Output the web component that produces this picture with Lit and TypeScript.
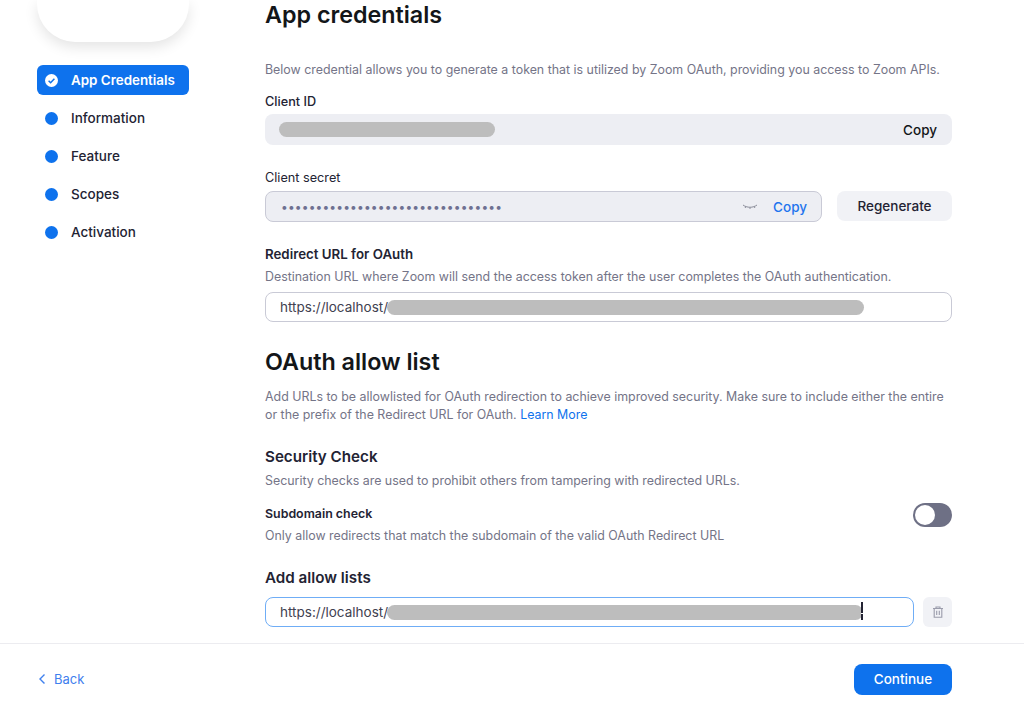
import { LitElement, html, css } from "lit";
import { customElement } from "lit/decorators.js";

@customElement("app-root")
export class AppRoot extends LitElement {
  static styles = css`
    :host { display: block; width: 1024px; height: 708px; overflow: hidden; background: #fff; font-family: Inter, "Liberation Sans", sans-serif; color: #131619; }
    * { box-sizing: border-box; }
    .top { display: flex; height: 643px; overflow: hidden; }
    .side { width: 265px; flex: none; padding-left: 37px; }
    .logo { width: 152px; height: 42px; background: #fff; border-radius: 0 0 38px 38px; box-shadow: 0 5px 14px rgba(0,0,0,.11); margin-bottom: 23px; }
    .nav { display: flex; flex-direction: column; gap: 8px; width: 152px; }
    .item { height: 30px; border-radius: 6px; display: flex; align-items: center; padding-left: 8px; gap: 13px; font-size: 13.5px; font-weight: 500; color: #232333; }
    .item.on { background: #0e72ed; color: #fff; font-weight: 600; font-size: 13.4px; }
    .dot { width: 13px; height: 13px; border-radius: 50%; background: #0e72ed; flex: none; }
    .item svg { width: 13px; height: 13px; flex: none; display: block; }
    .main { width: 687px; flex: none; }
    h1 { margin: 0; font-size: 23.3px; line-height: 30px; font-weight: 600; color: #131619; }
    .desc { font-size: 12.4px; line-height: 18px; color: #747487; margin: 0; }
    .d1 { margin-top: 31px; }
    .label { font-size: 12.7px; line-height: 18px; font-weight: 500; color: #232333; margin: 0; }
    .l1 { margin-top: 14px; margin-bottom: 3px; }
    .box { height: 31px; border-radius: 8px; background: #edeef3; display: flex; align-items: center; justify-content: space-between; padding: 0 15px 0 14px; font-size: 13.5px; font-weight: 500; }
    .mask { display: block; height: 15px; background: #bdbdbd; border-radius: 8px; flex: none; }
    .l2 { margin-top: 24px; margin-bottom: 4px; font-weight: 400; }
    .row { display: flex; gap: 15px; }
    .secret { flex: 1; height: 31px; border-radius: 8px; background: #edeef3; border: 1px solid #c9cad6; display: flex; align-items: center; padding: 0 14px 0 15px; font-size: 13.5px; }
    .dots { color: #6e7091; font-size: 12px; letter-spacing: 0.16px; flex: 1; line-height: 1; }
    .eye { width: 16px; height: 8px; margin-right: 15px; display: block; }
    .blue { color: #1f75ee; font-weight: 500; }
    .regen { width: 115px; height: 30px; border-radius: 8px; background: #f1f2f6; font-size: 13.5px; font-weight: 500; color: #232333; display: flex; align-items: center; justify-content: center; }
    .l3 { margin-top: 22px; font-weight: 600; font-size: 13.3px; line-height: 20px; }
    .d3 { margin-top: 4px; }
    .input { height: 30px; border: 1px solid #c9cad6; border-radius: 8px; display: flex; align-items: center; padding-left: 14px; font-size: 13.5px; color: #3f4150; background: #fff; margin-top: 6px; }
    .input .mask { margin-left: -1px; }
    .h2 { margin-top: 25px; }
    .d4 { margin-top: 11px; }
    a { color: #0e72ed; text-decoration: none; }
    h2 { margin: 0; font-size: 15.2px; line-height: 22px; font-weight: 600; color: #232333; }
    .sc { margin-top: 22px; }
    .d5 { margin-top: 4px; }
    .sub { display: flex; justify-content: space-between; align-items: flex-start; margin-top: 15px; }
    .sub .label { font-weight: 600; font-size: 12.4px; }
    .sub .desc { margin-top: 4px; }
    .toggle { width: 39px; height: 24px; border-radius: 12px; background: #6e7085; position: relative; flex: none; margin-top: -2px; }
    .knob { position: absolute; left: 2px; top: 2px; width: 20px; height: 20px; border-radius: 50%; background: #fff; }
    .h2b { margin-top: 22px; }
    .allow { display: flex; align-items: center; gap: 9px; margin-top: 8px; }
    .allow .input { flex: 1; margin: 0; border-color: #6fadf6; position: relative; }
    .caret { position: absolute; left: 595px; top: 4px; width: 2px; height: 18px; background: linear-gradient(#232333 60%, #fff 60%, #fff 68%, #232333 68%); }
    .trash { width: 29px; height: 30px; border-radius: 6px; background: #f1f2f6; display: flex; align-items: center; justify-content: center; flex: none; }
    .trash svg { width: 14px; height: 14px; display: block; }
    .foot { height: 65px; border-top: 1px solid #ececf0; display: flex; align-items: center; justify-content: space-between; padding: 7px 72px 0 38px; }
    .back { display: flex; align-items: center; gap: 8px; color: #3f80ee; font-size: 13px; margin-top: -1px; }
    .back svg { width: 8px; height: 12px; display: block; }
    .cont { width: 98px; height: 31px; padding-bottom: 1px; background: #0e72ed; color: #fff; border-radius: 8px; display: flex; align-items: center; justify-content: center; font-size: 13.5px; font-weight: 500; }
  `;

  render() {
    const dots = "•".repeat(32);
    return html`
      <div class="top">
        <div class="side">
          <div class="logo"></div>
          <div class="nav">
            <div class="item on">
              <svg viewBox="0 0 13 13"><circle cx="6.5" cy="6.5" r="6.5" fill="#fff"/><path d="M3.6 6.7l2 2 3.8-4" fill="none" stroke="#0e72ed" stroke-width="1.5"/></svg>
              App Credentials
            </div>
            ${["Information", "Feature", "Scopes", "Activation"].map(
              (t) => html`<div class="item"><span class="dot"></span>${t}</div>`
            )}
          </div>
        </div>
        <div class="main">
          <h1>App credentials</h1>
          <p class="desc d1">Below credential allows you to generate a token that is utilized by Zoom OAuth, providing you access to Zoom APIs.</p>
          <p class="label l1">Client ID</p>
          <div class="box"><span class="mask" style="width:216px"></span><span>Copy</span></div>
          <p class="label l2">Client secret</p>
          <div class="row">
            <div class="secret">
              <span class="dots">${dots}</span>
              <svg class="eye" viewBox="0 0 16 8"><path d="M1 2c4 3 10 3 14 0M4 3.5L3 5M8 4.5V6M12 3.5l1 1.5" fill="none" stroke="#8a8c99" stroke-width="1"/></svg>
              <span class="blue">Copy</span>
            </div>
            <div class="regen">Regenerate</div>
          </div>
          <p class="label l3">Redirect URL for OAuth</p>
          <p class="desc d3">Destination URL where Zoom will send the access token after the user completes the OAuth authentication.</p>
          <div class="input">https://localhost/<span class="mask" style="width:477px"></span></div>
          <h1 class="h2">OAuth allow list</h1>
          <p class="desc d4">Add URLs to be allowlisted for OAuth redirection to achieve improved security. Make sure to include either the entire or the prefix of the Redirect URL for OAuth. <a>Learn More</a></p>
          <h2 class="sc">Security Check</h2>
          <p class="desc d5">Security checks are used to prohibit others from tampering with redirected URLs.</p>
          <div class="sub">
            <div>
              <p class="label">Subdomain check</p>
              <p class="desc">Only allow redirects that match the subdomain of the valid OAuth Redirect URL</p>
            </div>
            <div class="toggle"><span class="knob"></span></div>
          </div>
          <h2 class="h2b">Add allow lists</h2>
          <div class="allow">
            <div class="input">https://localhost/<span class="mask" style="width:476px"></span><span class="caret"></span></div>
            <div class="trash"><svg viewBox="0 0 14 14"><path d="M2 3.5h10M5 3.5V2h4v1.5M3.2 3.5v8.7h7.6V3.5M5.7 5.8v4.2M8.3 5.8v4.2" fill="none" stroke="#9a9cab" stroke-width="1.1"/></svg></div>
          </div>
        </div>
      </div>
      <div class="foot">
        <div class="back"><svg viewBox="0 0 8 12"><path d="M6.5 1.5L2 6l4.5 4.5" fill="none" stroke="#3f80ee" stroke-width="1.4"/></svg>Back</div>
        <div class="cont">Continue</div>
      </div>
    `;
  }
}
